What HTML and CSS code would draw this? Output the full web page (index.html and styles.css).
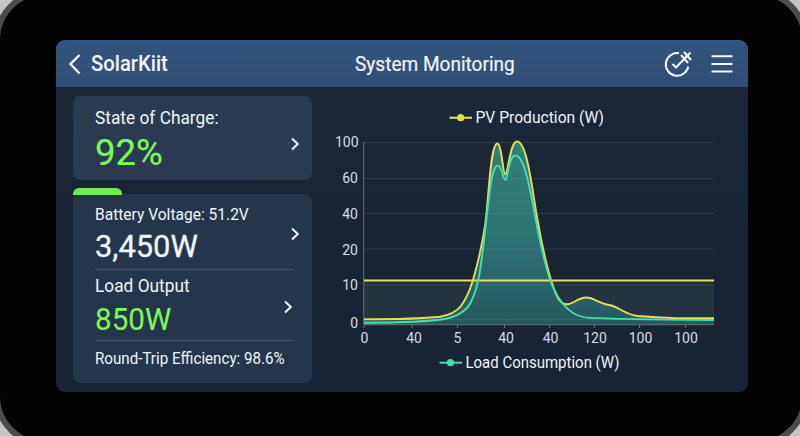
FILE: index.html
```html
<!DOCTYPE html>
<html lang="en">
<head>
  <meta charset="UTF-8">
  <meta name="viewport" content="width=device-width, initial-scale=1.0">
  <title>SolarKiit - System Monitoring</title>
  <link rel="stylesheet" href="styles.css">
</head>
<body>
  <div class="device">
    <div class="screen">
      <header class="header">
        <svg class="back" width="14" height="22" viewBox="0 0 14 22"><path d="M11.5 2L2.5 11L11.5 20.5"/></svg>
        <span class="brand">SolarKiit</span>
        <h1 class="title">System Monitoring</h1>
        <svg class="status" width="30" height="28" viewBox="0 0 30 28">
          <path d="M15 3.3A11.3 11.3 0 1 0 24.2 16.5"/>
          <path d="M8.5 14L12 17.5L24.5 4.5"/>
          <path d="M17 5L24 13M20 2L27 10M26.5 2.5L21.5 7.5"/>
        </svg>
        <svg class="menu" width="22" height="20" viewBox="0 0 22 20"><path d="M0.5 2.3H21.5M0.5 10H21.5M0.5 17.6H21.5"/></svg>
      </header>
      <main class="main">
        <section class="cards">
          <div class="card charge">
            <div>
              <div class="label">State of Charge:</div>
              <div class="percent">92%</div>
            </div>
            <svg class="arrow" width="10" height="14" viewBox="0 0 10 14"><path d="M2 1.5L7.8 7L2 12.5"/></svg>
          </div>
          <div class="card power">
            <div class="tab"></div>
            <div class="row voltage">
              <div>
                <div class="small">Battery Voltage: 51.2V</div>
                <div class="watts">3,450W</div>
              </div>
              <svg class="arrow" width="10" height="14" viewBox="0 0 10 14"><path d="M2 1.5L7.8 7L2 12.5"/></svg>
            </div>
            <div class="row load">
              <div>
                <div class="label">Load Output</div>
                <div class="watts green">850W</div>
              </div>
              <svg class="arrow" width="10" height="14" viewBox="0 0 10 14"><path d="M2 1.5L7.8 7L2 12.5"/></svg>
            </div>
            <div class="efficiency">Round-Trip Efficiency: 98.6%</div>
          </div>
        </section>
        <svg class="chart" width="436" height="305" viewBox="312 87 436 305">
          <defs>
            <linearGradient id="area" x1="0" y1="0" x2="0" y2="1">
              <stop offset="0" stop-color="#328078"/>
              <stop offset="0.5" stop-color="#2d7475"/>
              <stop offset="1" stop-color="#265860"/>
            </linearGradient>
          </defs>

          <path class="pv" d="M449.5 117.7H472"/>
          <circle class="pv-dot" cx="460.7" cy="117.7" r="3.6"/>
          <text class="legend" x="475.5" y="123" textLength="128.5" lengthAdjust="spacingAndGlyphs">PV Production (W)</text>

          <path class="band" d="M364 280.5H714V324.5H364Z"/>
          <path class="grid" d="M364 142.5H714"/>

          <path class="area" d="M364 319.3C390 319.3 420 319 440 316.8C450 315 457 311 461 306C466 299 470 290 473 280C478 263 482 245 485 226C489 199 490 143.5 497.5 143.5C501.5 143.5 503 174.5 505.2 174.5C508 174.5 510 141.5 517 141.5C527 141.5 532 188 537 217C541 241 546 263 551 280C555 292 558 304 567 304.3C574 304.5 577 297.5 586.5 297.5C594 297.5 599 303.5 609 305C619 306.5 624 314.5 638 316C655 317 672 318.3 685 318.3H714V324.5H364Z"/>
          <path class="grid" d="M364 178.5H714M364 213.5H714M364 249H714M364 285H714M364 319.5H714"/>

          <path class="pv" d="M364 280.5H714"/>
          <path class="pv" d="M364 319.3C390 319.3 420 319 440 316.8C450 315 457 311 461 306C466 299 470 290 473 280C478 263 482 245 485 226C489 199 490 143.5 497.5 143.5C501.5 143.5 503 174.5 505.2 174.5C508 174.5 510 141.5 517 141.5C527 141.5 532 188 537 217C541 241 546 263 551 280C555 292 558 304 567 304.3C574 304.5 577 297.5 586.5 297.5C594 297.5 599 303.5 609 305C619 306.5 624 314.5 638 316C655 317 672 318.3 685 318.3H714"/>
          <path class="use" d="M364 322.7C395 322.7 430 321.5 446 318.8C458 316 467 310 471 302C477 290 479 280 481 264C484 243 486 222 488 206C490.5 182 493 165.6 497.8 165.6C502 165.6 503 180 505.5 180C508 180 508 155.5 515.5 155.5C524.5 155.5 530 190 534.5 213C540 243 545 264 550 280C556 296 567 317.7 590 317.9C620 319 660 320 714 320"/>

          <path class="axis" d="M363.7 142V324.7H714M364 324.7V328M412 324.7V328M457.5 324.7V328M504.5 324.7V328M549.5 324.7V328M594.5 324.7V328M639.5 324.7V328M685.5 324.7V328"/>

          <g class="ticks y">
            <text x="358.5" y="147">100</text>
            <text x="358" y="183">60</text>
            <text x="358" y="218.5">40</text>
            <text x="358" y="254.5">20</text>
            <text x="358" y="290">10</text>
            <text x="358" y="327.5">0</text>
          </g>
          <g class="ticks x">
            <text x="364.5" y="343">0</text>
            <text x="414" y="343">40</text>
            <text x="457.5" y="343">5</text>
            <text x="506" y="343">40</text>
            <text x="550.5" y="343">40</text>
            <text x="595" y="343">120</text>
            <text x="640.5" y="343">100</text>
            <text x="686" y="343">100</text>
          </g>

          <path class="use" d="M439.5 362.7H462"/>
          <circle class="use-dot" cx="450.5" cy="362.7" r="3.6"/>
          <text class="legend" x="465.5" y="368" textLength="154" lengthAdjust="spacingAndGlyphs">Load Consumption (W)</text>
        </svg>
      </main>
    </div>
  </div>
</body>
</html>
```
FILE: styles.css
```css
* {
  box-sizing: border-box;
}
body {
  margin: 0;
  height: 436px;
  overflow: hidden;
  background-color: #c4c4c4;
  font-family: Roboto, "Liberation Sans", sans-serif;
  color: #f2f5f8;
}
.device {
  width: 814px;
  height: 458px;
  margin: -11px 0 0 -6px;
  padding: 45px 56px 0;
  border: 6px solid #4b4b4b;
  border-radius: 51px;
  background-color: #030303;
}
.screen {
  width: 692px;
  height: 352px;
  border-radius: 9px;
  overflow: hidden;
  background: linear-gradient(#1c293a, #182334 60%, #182435);
}
.header {
  display: flex;
  align-items: center;
  height: 47px;
  padding: 0 15px 0 12px;
  background: linear-gradient(#32557d, #304e74);
}
.header svg {
  fill: none;
  stroke: #f4f7fa;
  stroke-width: 2;
}
.header .back {
  stroke-width: 2.4;
}
.brand,
.title,
.label,
.percent,
.small,
.watts,
.efficiency {
  white-space: nowrap;
  transform-origin: left center;
}
.brand {
  width: 255px;
  margin-left: 9px;
  font-size: 22px;
  font-weight: 500;
  transform: scaleX(0.92);
}
.title {
  flex: 1;
  margin: 1px 0 0 9px;
  font-size: 21px;
  font-weight: 400;
  -webkit-text-stroke: 0.2px #f2f5f8;
  transform: scaleX(0.907);
}
.status {
  margin-right: 17px;
}
.main {
  display: flex;
  height: 305px;
}
.cards {
  width: 256px;
  padding: 9px 0 0 17px;
}
.card {
  border-radius: 7px;
  background-color: #2a3a51;
}
.charge {
  display: flex;
  justify-content: space-between;
  height: 84px;
  padding: 10px 12px 0 22px;
}
.arrow {
  flex: none;
  fill: none;
  stroke: #f2f5f8;
  stroke-width: 2;
}
.charge .arrow {
  margin-top: 31px;
}
.label {
  font-size: 18.5px;
  line-height: 24px;
  transform: scaleX(0.935);
}
.percent {
  font-size: 37.5px;
  line-height: 44px;
  color: #7ff65b;
  -webkit-text-stroke: 0.2px #7ff65b;
  transform: scaleX(0.975);
}
.power {
  position: relative;
  height: 189px;
  margin-top: 14px;
  padding: 10px 19px 0 22px;
  background-color: #25354b;
}
.tab {
  position: absolute;
  left: 0;
  top: -6px;
  width: 49px;
  height: 7px;
  border-radius: 6px 6px 0 0;
  background-color: #74e957;
}
.row {
  display: flex;
  justify-content: space-between;
  border-bottom: 1px solid #44536a;
}
.voltage {
  height: 66px;
}
.voltage .arrow {
  margin: 23px -7px 0 0;
}
.load {
  height: 71px;
}
.load .arrow {
  margin-top: 30px;
}
.small {
  font-size: 16px;
  line-height: 22px;
  transform: scaleX(0.972);
}
.watts {
  font-size: 31.5px;
  line-height: 42px;
  -webkit-text-stroke: 0.3px;
  transform: scaleX(0.98);
}
.load .label {
  padding-top: 4px;
}
.green {
  font-size: 30.5px;
  line-height: 44px;
  color: #7ff65b;
  -webkit-text-stroke: 0.1px;
  transform: scaleX(0.97);
}
.efficiency {
  padding-top: 8px;
  font-size: 15.7px;
  line-height: 20px;
  transform: scaleX(0.965);
}
.chart {
  flex: none;
}
.chart path {
  fill: none;
}
.chart .pv {
  stroke: #e9dd59;
  stroke-width: 1.9;
}
.pv-dot {
  fill: #dfe052;
}
.chart .use {
  stroke: #47e0aa;
  stroke-width: 1.9;
}
.use-dot {
  fill: #46dda5;
}
.chart .band {
  fill: #25323f;
}
.chart .area {
  fill: url(#area);
}
.chart .grid {
  stroke: #8397a5;
  stroke-opacity: 0.22;
}
.chart .axis {
  stroke: #66737f;
}
.legend {
  font-size: 16.5px;
  fill: #f0f3f6;
}
.ticks {
  font-size: 14px;
  fill: #d8dde3;
}
.ticks.y {
  text-anchor: end;
}
.ticks.x {
  text-anchor: middle;
}
```
